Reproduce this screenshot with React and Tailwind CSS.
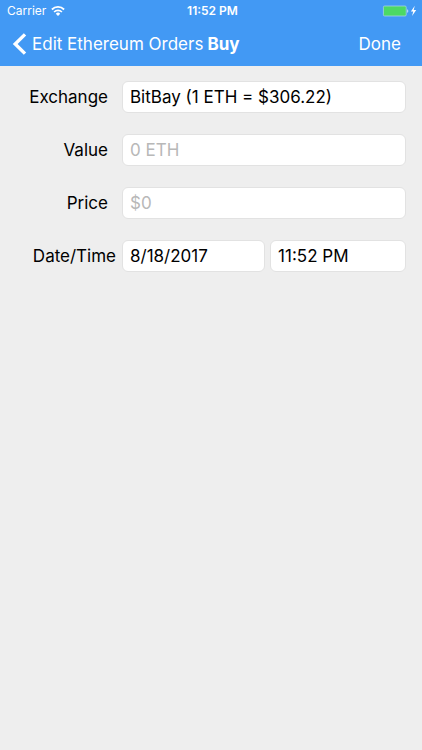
import { useState } from "react";

const FIELD =
  "h-8 w-full min-w-0 appearance-none rounded-md border border-[#e2e2e2] bg-white px-[7px] text-[17px] leading-6 text-black placeholder:text-[#b8b8b8] outline-none";

/**
 * iOS style status bar: carrier and signal, clock, charging battery.
 */
const StatusBar = () => {
  return (
    <div className="grid h-[22px] grid-cols-3 items-center pl-[7px] pr-1 text-xs">
      <div className="flex items-center gap-[5px]">
        <span>Carrier</span>
        <svg className="h-[10px] w-[14px]" viewBox="0 0 14 10" fill="none" stroke="white" aria-hidden="true">
          <path d="M0.9 3.5a8.6 8.6 0 0 1 12.2 0" strokeWidth="1.8" />
          <path d="M3.1 6a5.5 5.5 0 0 1 7.8 0" strokeWidth="1.7" />
          <path d="M7 9.9 4.8 7.7a3.1 3.1 0 0 1 4.4 0z" fill="white" stroke="none" />
        </svg>
      </div>
      <span className="text-center font-semibold">11:52 PM</span>
      <div className="flex items-center justify-end">
        <svg className="h-3 w-9" viewBox="0 0 36 12" aria-hidden="true">
          <rect x="1.4" y="1" width="22.8" height="10" rx="1.2" fill="#4cd964" stroke="#a5d0e8" strokeWidth="0.8" />
          <path d="M25.2 4.2c1.4.3 1.4 3.3 0 3.6z" fill="#c8e0fa" />
          <path d="M32.8 0.8 28.9 6.6h2.3L30.1 11 34.2 5.1h-2.5z" fill="white" />
        </svg>
      </div>
    </div>
  );
};

/**
 * Navigation bar with a back link, the screen title and the Done action.
 */
const NavBar = () => {
  return (
    <div className="flex h-11 items-center pl-3 pr-[21px] text-[17px] leading-6">
      <a href="#orders" className="flex items-center gap-[5px] whitespace-nowrap">
        <svg className="h-[22px] w-[15px]" viewBox="0 0 15 22" fill="none" stroke="white" strokeWidth="3.4" aria-hidden="true">
          <path d="M13 1.4 3.2 11 13 20.6" />
        </svg>
        Edit Ethereum Orders
      </a>
      <h1 className="ml-1 font-bold">Buy</h1>
      <button type="button" className="ml-auto">
        Done
      </button>
    </div>
  );
};

const FormRow = ({ label, htmlFor, wide, children }) => {
  return (
    <div className="flex items-center">
      <label
        htmlFor={htmlFor}
        className={`w-[106px] shrink-0 whitespace-nowrap text-right text-[17px] leading-6 ${wide ? "pr-[6px]" : "pr-[14px]"}`}
      >
        {label}
      </label>
      <div className="flex min-w-0 flex-1 gap-[5px]">{children}</div>
    </div>
  );
};

const App = () => {
  const [value, setValue] = useState("");
  const [price, setPrice] = useState("");
  const [date, setDate] = useState("8/18/2017");
  const [time, setTime] = useState("11:52 PM");

  return (
    <div className="min-h-screen bg-[#eeeeee] font-['Inter',sans-serif] text-black">
      <header className="bg-[#4299f4] text-white">
        <StatusBar />
        <NavBar />
      </header>

      <form className="flex flex-col gap-[21px] px-4 pt-[15px]" onSubmit={(e) => e.preventDefault()}>
        <FormRow label="Exchange" htmlFor="exchange">
          <select id="exchange" className={FIELD}>
            <option>BitBay (1 ETH = $306.22)</option>
          </select>
        </FormRow>
        <FormRow label="Value" htmlFor="value">
          <input
            id="value"
            className={FIELD}
            placeholder="0 ETH"
            value={value}
            onChange={(e) => setValue(e.target.value)}
          />
        </FormRow>
        <FormRow label="Price" htmlFor="price">
          <input
            id="price"
            className={FIELD}
            placeholder="$0"
            value={price}
            onChange={(e) => setPrice(e.target.value)}
          />
        </FormRow>
        <FormRow label="Date/Time" htmlFor="date" wide>
          <div className="min-w-0 flex-[20]">
            <input id="date" className={FIELD} value={date} onChange={(e) => setDate(e.target.value)} />
          </div>
          <div className="min-w-0 flex-[19]">
            <input
              aria-label="Time"
              className={FIELD}
              value={time}
              onChange={(e) => setTime(e.target.value)}
            />
          </div>
        </FormRow>
      </form>
    </div>
  );
};

export default App;
